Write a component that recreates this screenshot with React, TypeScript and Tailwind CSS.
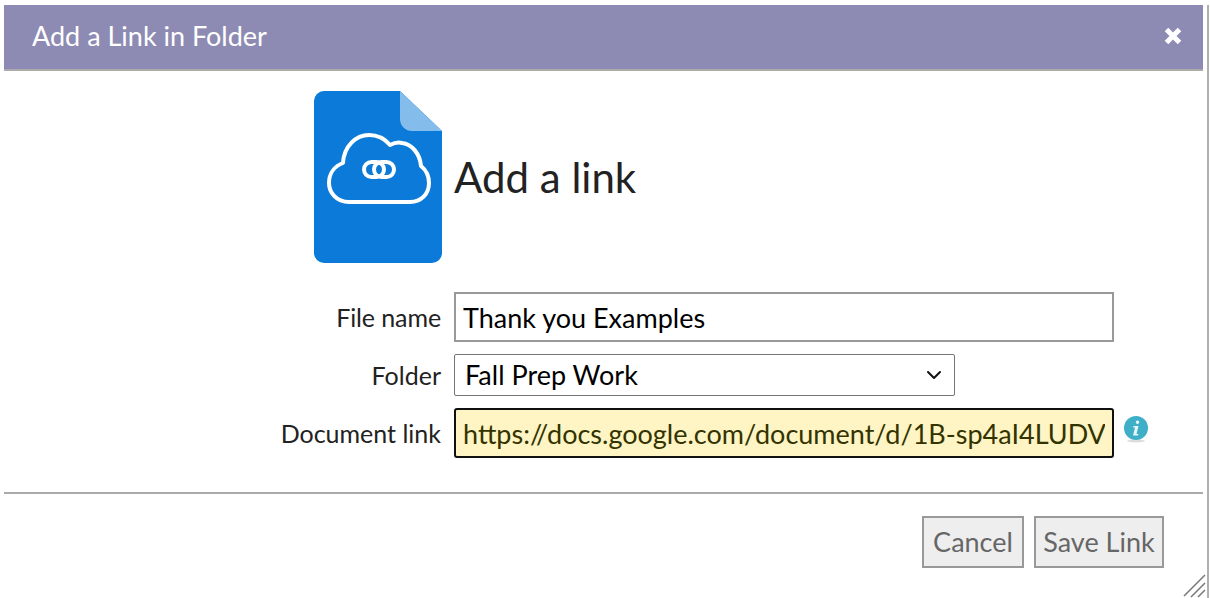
import React from 'react';
import { ChevronDown } from 'lucide-react';

const labelClass = 'w-[441px] pr-0 text-right text-[25px] leading-none text-[#222222] tracking-[-0.1px]';

const FileIcon = () => (
  <svg width="128" height="172" viewBox="0 0 128 172" className="shrink-0">
    <path d="M10 0H86L128 40V162a10 10 0 0 1-10 10H10a10 10 0 0 1-10-10V10A10 10 0 0 1 10 0Z" fill="#0b7ad8" />
    <path d="M86 0L128 40H98a12 12 0 0 1-12-12Z" fill="#84bcec" />
    <path
      d="M35 111C22 111 15 101 15 92C15 82 21 75 29 72C30 55 42 44 55 44C64 44 71 48 76 54C80 52 84 51 88 52C98 53 106 63 107 75C112 79 115 85 115 92C115 103 107 111 96 111Z"
      fill="none"
      stroke="#fff"
      strokeWidth="4"
      strokeLinejoin="round"
    />
    <rect x="50" y="71" width="20" height="15" rx="7.5" fill="none" stroke="#fff" strokeWidth="4" />
    <rect x="60" y="71" width="20" height="15" rx="7.5" fill="none" stroke="#fff" strokeWidth="4" />
  </svg>
);

const InfoIcon = () => (
  <svg width="28" height="28" viewBox="0 0 28 28" className="ml-[8px] mt-[-8px] shrink-0">
    <ellipse cx="14" cy="26" rx="9" ry="1.5" fill="#dddddd" />
    <circle cx="14" cy="13" r="12" fill="#3fafc8" />
    <path d="M15.5 5.5a1.7 1.7 0 1 0 .01 0ZM11.5 11h5l-2 8h2l-.5 1.5h-5l2-8h-2Z" fill="#e4f6fa" />
  </svg>
);

const ResizeGrip = () => (
  <svg width="24" height="24" viewBox="0 0 24 24" className="absolute bottom-0 right-[3px]">
    <path d="M1 22L22 1M8 23L22 9M15 23L22 16" stroke="#777777" strokeWidth="1.5" fill="none" />
  </svg>
);

export default function App() {
  return (
    <div className="relative h-[598px] w-[1210px] overflow-hidden bg-white pl-1 pr-[1px] pt-[5px] font-['Lato','Carlito',sans-serif]">
      <div className="flex h-full flex-col border-r-2 border-r-[#b0b0b0] pr-[4px]">
        <div className="flex h-[66px] shrink-0 items-center justify-between border-b-2 border-b-[#aaaaaa] bg-[#8d8bb3] pb-[2px] pl-7 pr-[20px] text-[27px] text-white">
          <span>Add a Link in Folder</span>
          <svg width="20" height="20" viewBox="0 0 20 20">
            <path d="M3.5 3.5L16.5 16.5M16.5 3.5L3.5 16.5" stroke="#fff" strokeWidth="5" />
          </svg>
        </div>

        <div className="flex items-center pl-[310px] pt-[20px]">
          <FileIcon />
          <h1 className="ml-3 text-[42px] font-normal leading-none text-[#222222]">Add a link</h1>
        </div>

        <div className="mt-[29px] flex h-[50px] items-center">
          <label className={labelClass.replace('w-[441px]', 'w-[437px]')}>File name</label>
          <input
            readOnly
            value="Thank you Examples"
            className="ml-[13px] h-[50px] w-[660px] border-2 border-[#999999] bg-white px-[7px] text-[27px] text-black outline-none"
          />
        </div>

        <div className="mt-[12px] flex h-[42px] items-center">
          <label className="w-[437px] text-right text-[25px] leading-none text-[#222222]">Folder</label>
          <div className="ml-[13px] flex h-[42px] w-[501px] items-center justify-between rounded-[2px] border border-[#767676] bg-white pl-[10px] pr-[8px] text-[27px] text-black">
            <span>Fall Prep Work</span>
            <ChevronDown size={24} strokeWidth={2} color="#111111" />
          </div>
        </div>

        <div className="mt-[12px] flex h-[50px] items-center">
          <label className="w-[437px] text-right text-[25px] leading-none text-[#222222]">Document link</label>
          <input
            readOnly
            value="https://docs.google.com/document/d/1B-sp4aI4LUDVxkQ"
            className="ml-[13px] h-[50px] w-[660px] rounded-[3px] border-2 border-[#101010] bg-[#fff4c4] px-[7px] text-[27px] text-[#333300] outline-none"
          />
          <InfoIcon />
        </div>

        <div className="mt-[34px] flex flex-1 justify-end gap-[10px] border-t-2 border-t-[#aaaaaa] pr-[39px] pt-[22px]">
          <button className="h-[52px] w-[102px] border-2 border-[#999999] bg-[#eeeeee] text-[27px] text-[#666666]">Cancel</button>
          <button className="h-[52px] w-[130px] border-2 border-[#999999] bg-[#eeeeee] text-[27px] text-[#666666]">Save Link</button>
        </div>
      </div>
      <ResizeGrip />
    </div>
  );
}
